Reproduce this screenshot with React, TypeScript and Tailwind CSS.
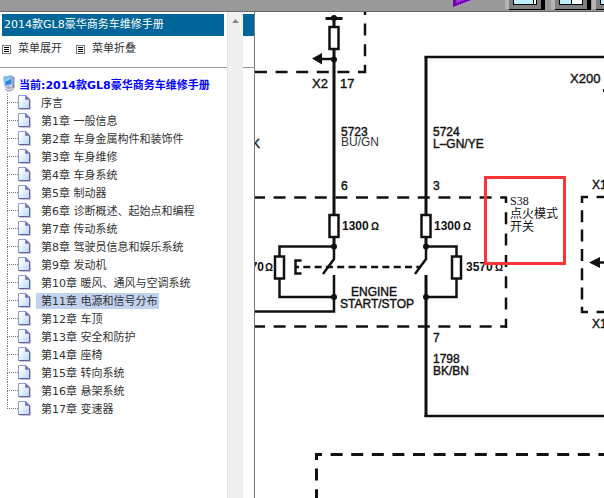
import React, { useState } from 'react';

const chapters = [
  '序言',
  '第1章 一般信息',
  '第2章 车身金属构件和装饰件',
  '第3章 车身维修',
  '第4章 车身系统',
  '第5章 制动器',
  '第6章 诊断概述、起始点和编程',
  '第7章 传动系统',
  '第8章 驾驶员信息和娱乐系统',
  '第9章 发动机',
  '第10章 暖风、通风与空调系统',
  '第11章 电源和信号分布',
  '第12章 车顶',
  '第13章 安全和防护',
  '第14章 座椅',
  '第15章 转向系统',
  '第16章 悬架系统',
  '第17章 变速器',
];

const ListIcon: React.FC = () => (
  <svg width="9" height="9" viewBox="0 0 9 9" shapeRendering="crispEdges">
    <rect x="0.5" y="0.5" width="8" height="8" fill="#fff" stroke="#777" />
    <path d="M2 2.5h5M2 4.5h5M2 6.5h5" stroke="#000" />
  </svg>
);

const PageIcon: React.FC = () => (
  <svg width="13" height="16" viewBox="0 0 13 16" className="shrink-0">
    <defs>
      <linearGradient id="page" x1="0" y1="0" x2="1" y2="1">
        <stop offset="0.2" stopColor="#fff" />
        <stop offset="1" stopColor="#b4d4fa" />
      </linearGradient>
    </defs>
    <path d="M2 14.5h10.5V5" fill="none" stroke="#c4c4c8" />
    <path d="M0.5 0.5H8L11.5 4V13.5H0.5Z" fill="url(#page)" stroke="#8b9cd6" />
    <path d="M11.5 4V13.5H0.5" fill="none" stroke="#5e62a4" />
    <path d="M7.5 0.5V4.5H11.5Z" fill="#6a74bd" stroke="#5e62a4" strokeWidth="0.5" />
  </svg>
);

const ComputerIcon: React.FC = () => (
  <svg width="13" height="17" viewBox="0 0 13 17" className="shrink-0">
    <path d="M9 1l2.5 1v11L9 14.5z" fill="#8990b8" />
    <path d="M2 12.5l4-1.5 5 1.5-1 3-4 1.2L2 15z" fill="#a9a8c4" />
    <path d="M2 13.5l4 1.2 4-1.2" fill="none" stroke="#ececf5" />
    <path d="M0.5 2L8.5 0.5 9.5 9.5 2 11.5z" fill="#7ea6df" stroke="#a9bfe6" />
    <path d="M1.8 3L7.6 1.8 8.3 8.6 3 10z" fill="#2589df" />
    <path d="M1.8 3L7.6 1.8 7.9 4 2.4 7z" fill="#86cdf8" />
  </svg>
);

const TopBar: React.FC = () => (
  <header className="flex h-3 justify-end overflow-hidden border-b border-[#666] bg-[#999]">
    <button aria-label="play" className="mr-8 flex items-start">
      <svg width="20" height="8" viewBox="0 0 20 8">
        <path d="M0 0H19L0 7.5Z" fill="#7400b4" />
        <path d="M3 0H12L3 3Z" fill="#9a32d4" />
        <path d="M0.5 7.2L19 0.3" stroke="#d8b8ec" strokeDasharray="1 1" />
      </svg>
    </button>
    <button aria-label="single page" className="mr-[6px] flex items-start">
      <svg width="40" height="11" viewBox="0 0 40 11" shapeRendering="crispEdges">
        <path d="M0 0H4V9H0Z" fill="#b5b5b5" />
        <path d="M4 0H36V9H4Z" fill="#808080" />
        <path d="M36 0H40V10H4V9H36Z" fill="#000" />
        <path d="M8 0H32V5H8Z" fill="#000" />
        <path d="M9 0H28V4H9Z" fill="#bdefff" />
        <path d="M29 0H31V4H29Z" fill="#fff" />
      </svg>
    </button>
    <button aria-label="split page" className="mr-px flex items-start">
      <svg width="40" height="11" viewBox="0 0 40 11" shapeRendering="crispEdges">
        <path d="M0 0H4V9H0Z" fill="#b5b5b5" />
        <path d="M4 0H36V9H4Z" fill="#808080" />
        <path d="M36 0H40V10H4V9H36Z" fill="#000" />
        <path d="M8 0H32V5H8Z" fill="#000" />
        <path d="M9 0H20V4H9Z" fill="#bdefff" />
        <path d="M21 0H31V4H21Z" fill="#fff" />
      </svg>
    </button>
    <button aria-label="page list" className="flex items-start">
      <svg width="12" height="11" viewBox="0 0 12 11" shapeRendering="crispEdges">
        <path d="M0 0H4V9H0Z" fill="#b5b5b5" />
        <path d="M4 0H12V9H4Z" fill="#808080" />
        <path d="M4 9H12V10H4Z" fill="#000" />
        <path d="M8 0H12V5H8Z" fill="#000" />
        <path d="M9 0H12V4H9Z" fill="#bdefff" />
      </svg>
    </button>
  </header>
);

const Sidebar: React.FC = () => {
  const [selected, setSelected] = useState(11);

  return (
    <aside className="flex w-[254px] shrink-0 bg-white">
      <nav className="w-[227px] pt-[2px] text-[11px] leading-[18px] text-[#333]">
        <h1 className="ml-[2px] mr-[3px] h-[22px] bg-[#006699] pl-[2px] leading-[22px] text-white">
          2014款GL8豪华商务车维修手册
        </h1>
        <div className="flex h-8 gap-[14px] border-b border-[#999] pl-[2px] pt-1">
          <button className="flex h-[18px] items-center gap-[7px]">
            <ListIcon />
            菜单展开
          </button>
          <button className="flex h-[18px] items-center gap-[7px]">
            <ListIcon />
            菜单折叠
          </button>
        </div>

        {/* Chapter tree */}
        <div className="flex h-[26px] items-start gap-[3px] pl-[3px] pt-[7px]">
          <ComputerIcon />
          <a href="#root" className="font-bold leading-[22px] text-[#0000ff]">
            当前:2014款GL8豪华商务车维修手册
          </a>
        </div>
        <ul className="pl-[7px]">
          {chapters.map((title, i) => (
            <li key={title} className="flex h-[18px] items-center">
              <div className="h-[18px] w-[11px]">
                <div className="h-[9px] border-b border-l border-dotted border-[#777]"></div>
                {i < chapters.length - 1 && (
                  <div className="h-[9px] border-l border-dotted border-[#777]"></div>
                )}
              </div>
              <PageIcon />
              <a
                href={`#chapter-${i}`}
                onClick={() => setSelected(i)}
                className={`ml-[5px] h-4 pl-[5px] pr-px leading-[18px] ${i === selected ? 'bg-[#c1d2ee]' : ''}`}
              >
                {title}
              </a>
            </li>
          ))}
        </ul>
      </nav>

      {/* Scrollbar track */}
      <div className="flex w-4 justify-center border-l border-[#e3e3e3] bg-[#f0f0f0] pt-[7px]">
        <svg width="7" height="4" viewBox="0 0 7 4">
          <path d="M0 4L3.5 0 7 4Z" fill="#868686" />
        </svg>
      </div>
      <div className="flex-1 pt-[2px]">
        <div className="h-[22px] bg-[#006699]"></div>
        <div className="h-8 border-b border-[#999]"></div>
      </div>
    </aside>
  );
};

const Resistor: React.FC<{ x: number; y: number }> = ({ x, y }) => (
  <rect x={x - 4.5} y={y} width="9" height="22" fill="#fff" stroke="#111" strokeWidth="2.5" />
);

const Diagram: React.FC = () => (
  <svg
    width="349"
    height="486"
    viewBox="255 12 349 486"
    className="block"
    fill="none"
    stroke="#111"
    strokeWidth="2.5"
  >
    {/* Module outlines */}
    <g strokeDasharray="12 8.6">
      <path d="M255 72H366" />
      <path d="M365 12V73" strokeDashoffset="9" />
      <path d="M255 197.5H507" strokeDashoffset="2" />
      <path d="M255 326.5H507" strokeDashoffset="2" />
      <path d="M506 197V328" strokeDasharray="12 9.3" strokeDashoffset="6" />
      <path d="M581 197H604" strokeDashoffset="5" />
      <path d="M581 312H604" strokeDashoffset="5" />
      <path d="M582 196V313" strokeDasharray="12 7.3" strokeDashoffset="5" />
      <path d="M315 454.5H604" strokeDashoffset="5" strokeWidth="3" />
      <path d="M316.5 453V498" strokeDashoffset="5" strokeWidth="3" />
    </g>

    {/* Wires */}
    <path d="M334 17V246M426 215V56.5M426 238V246M426 275V417" strokeWidth="3" />
    <path d="M424.5 57H604M424.5 416H604" />
    <path d="M325.5 18.5H342.5" strokeWidth="3" />
    <path d="M334 59H320" />
    <path d="M334 246.5H279.5V297H334M426 246.5H456.5V297H426" />
    <path d="M334 275V311.5H255" />
    <path d="M334 246V259L323 274M426 246V259L415 274" />
    <path d="M301.5 260.5H295.5V273.5H301.5" />
    <path d="M295 267H421" strokeDasharray="7 4.3" strokeDashoffset="3" />
    <path d="M598 262.5H604" />
    <g fill="#111" stroke="none">
      <path d="M312 58.5L322 53V64.5Z" />
      <path d="M589 262.5L600 257V268Z" />
      <path d="M603 89H604V92H603Z" />
      <circle cx="334" cy="18" r="3" />
      <circle cx="334" cy="59.5" r="3" />
      <circle cx="334" cy="246.5" r="3" />
      <circle cx="334" cy="297" r="3" />
      <circle cx="426" cy="246.5" r="3" />
      <circle cx="426" cy="297" r="3" />
    </g>

    <Resistor x={334} y={27} />
    <Resistor x={334} y={215} />
    <Resistor x={426} y={215} />
    <Resistor x={279.5} y={256.5} />
    <Resistor x={456.5} y={256.5} />

    {/* Labels */}
    <g fill="#111" strokeWidth="0.4" className="font-['Liberation_Sans',Arial,sans-serif] text-[12px]">
      <text x="312" y="88" className="text-[13px]">X2</text>
      <text x="340" y="88" className="text-[13px]">17</text>
      <text x="341" y="136">5723</text>
      <text x="341" y="146" fill="#333" stroke="none">BU/GN</text>
      <text x="260" y="148" textAnchor="end">BK</text>
      <text x="433" y="136">5724</text>
      <text x="433" y="148">L–GN/YE</text>
      <text x="570" y="83" className="text-[13px]">X200</text>
      <text x="341" y="190">6</text>
      <text x="433" y="190">3</text>
      <text x="592" y="189">X1</text>
      <text x="592" y="328">X1</text>
      <text x="351" y="296">ENGINE</text>
      <text x="340" y="308">START/STOP</text>
      <text x="433" y="342">7</text>
      <text x="433" y="363">1798</text>
      <text x="433" y="375">BK/BN</text>
    </g>
    <g fill="#111" stroke="none" className="font-['Liberation_Sans',Arial,sans-serif] text-[12px] font-bold">
      <text x="342" y="230">1300</text>
      <text x="434" y="230">1300</text>
      <text x="466" y="271">3570</text>
      <text x="264" y="271" textAnchor="end">3570</text>
      <g className="text-[10px]">
        <text x="371" y="230">Ω</text>
        <text x="463" y="230">Ω</text>
        <text x="495" y="271">Ω</text>
        <text x="265" y="271">Ω</text>
      </g>
    </g>
    <g fill="#111" stroke="none" className="font-['Liberation_Serif','Noto_Sans_CJK_SC',serif] text-[12px]">
      <text x="510" y="205">S38</text>
      <text x="510" y="218">点火模式</text>
      <text x="510" y="231">开关</text>
    </g>

    <rect x="485.5" y="177.5" width="79" height="86" stroke="#fb3535" strokeWidth="3" />
  </svg>
);

const App: React.FC = () => {
  return (
    <div className="flex min-h-screen flex-col bg-white font-['DejaVu_Sans','Noto_Sans_CJK_SC',sans-serif]">
      <TopBar />
      <div className="flex flex-1">
        <Sidebar />
        <main className="min-w-0 flex-1 overflow-hidden border-l border-[#777]">
          <Diagram />
        </main>
      </div>
    </div>
  );
};

export default App;
